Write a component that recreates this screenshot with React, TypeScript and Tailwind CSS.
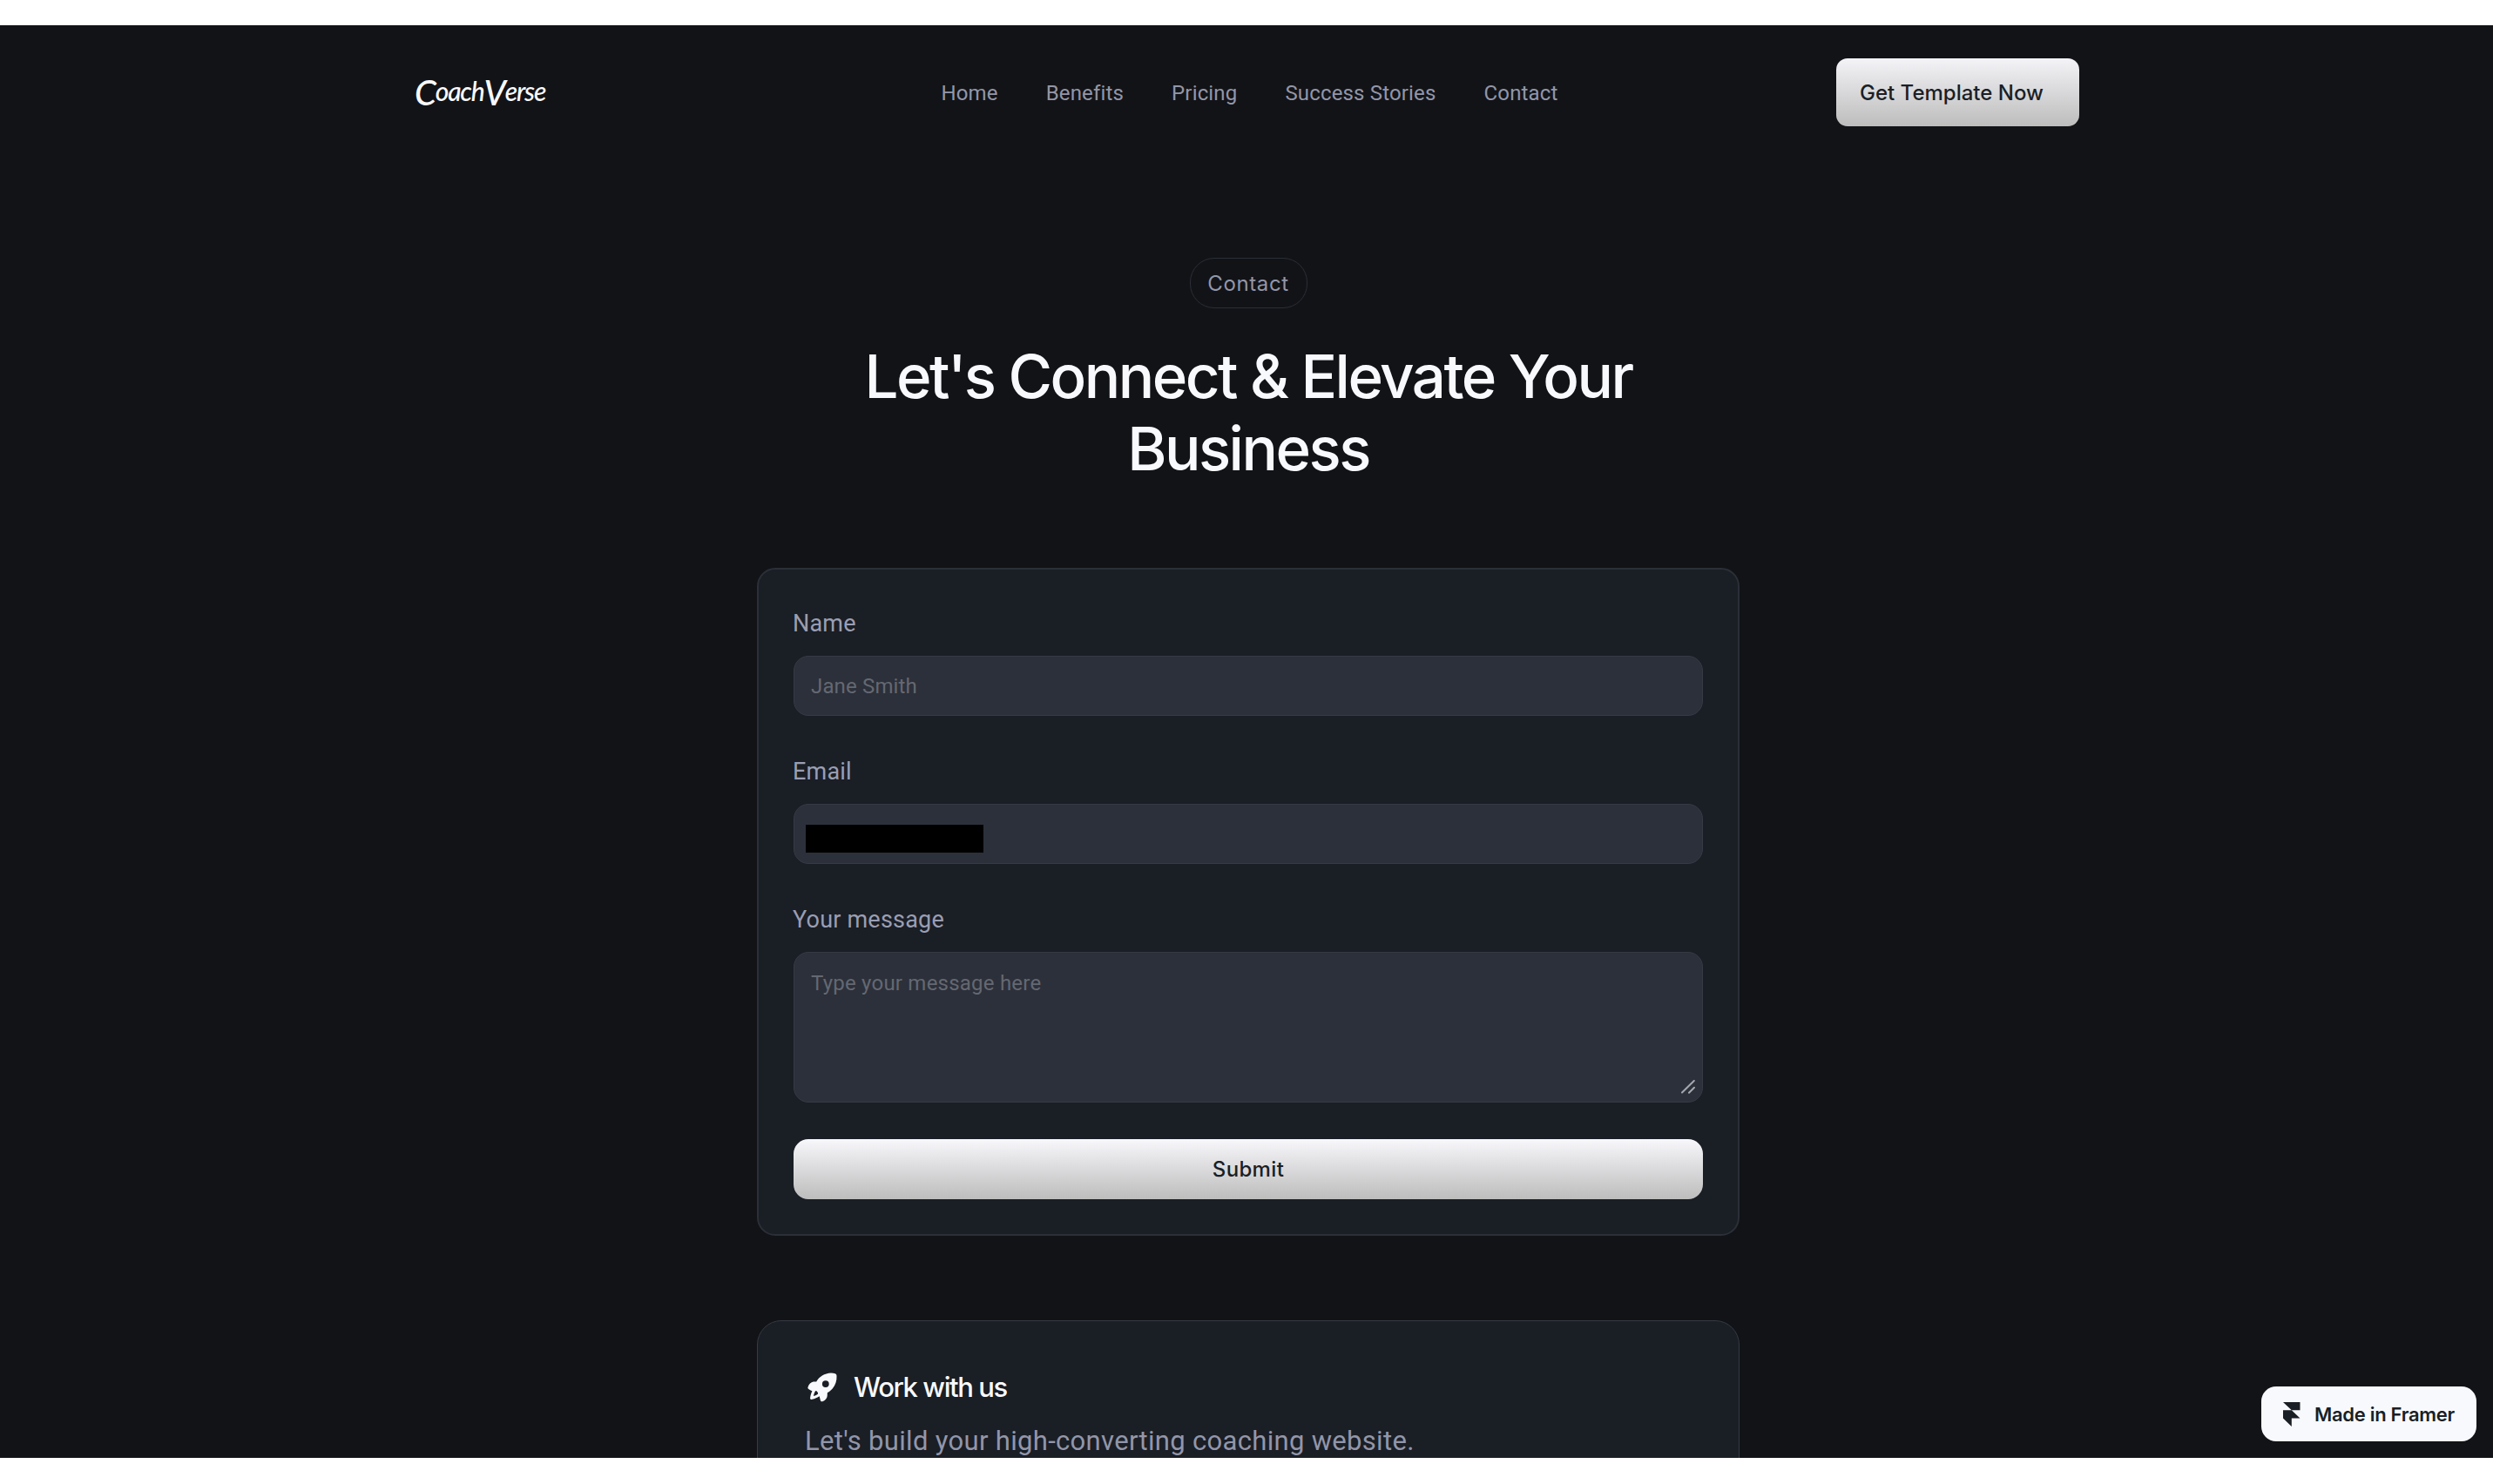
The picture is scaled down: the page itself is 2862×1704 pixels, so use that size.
const links = ['Home', 'Benefits', 'Pricing', 'Success Stories', 'Contact'];

function Logo() {
  return (
    <a className="-ml-[3px] flex h-[78px] items-baseline justify-self-start font-['Lato','Liberation_Sans',sans-serif] text-[30px] leading-[74px] font-medium tracking-[-1.2px] text-[#f8f9fc] italic">
      <span>
        <span className="align-[-5px] text-[40px] leading-none">C</span>oach
        <span className="align-[-5px] text-[40px] leading-none">V</span>erse
      </span>
    </a>
  );
}

function Label({ children }: { children: string }) {
  return (
    <label className="mb-4 block h-[43px] pt-px text-[27px] leading-[43px] tracking-[0.2px] text-[#9a9eb3]">
      <span className="-ml-px">{children}</span>
    </label>
  );
}

function Rocket() {
  return (
    <svg viewBox="0 0 34 34" className="size-[34px]" fill="#f8f9fc">
      <path
        fillRule="evenodd"
        d="M27 .6c2 0 3.600.2 4.800.6 1.200.4 1.600 1.200 1.700 2.700.3 5.500-1.400 10.500-4.800 14.600-1.500 1.900-3.600 3.500-5.700 4.500-.3 1-.1 2.400-.3 4-.3 2.800-2.500 5.300-5.400 6.200-1.300.4-2.100-.1-2.500-1.400l-1.100-4.600c-1.300.9-2.900 1.700-4.900 2.500-1.700.7-3.200 1.200-4.300 1.200-1.100 0-1.600-.7-1.400-1.900.3-2.600 1-5 2.300-7.800-1.600-.6-3-1.300-4.100-2.100C.4 18.500.2 17.700.6 16.600 1.600 13.600 3.900 11.100 6.900 10.600c1.200-.2 2.300-.1 3.300-.1C13.300 5 19.500.9 27 .6ZM20.800 9.200a3.900 3.900 0 1 0 0 7.800 3.900 3.900 0 0 0 0-7.800ZM8.600 22c-.9 1.700-1.400 3.300-1.700 5 1.800-.5 3.300-1.200 4.600-2.100.7-.5.8-1.200.3-2l-1-1.400c-.8-1-1.600-.7-2.200.5Z"
      />
    </svg>
  );
}

export default function App() {
  return (
    <div className="h-[1704px] w-[2862px] overflow-hidden bg-white pt-[29px] font-['Roboto','Liberation_Sans',sans-serif]">
      <main className="relative h-[1645px] overflow-hidden bg-[#121317] pl-1">
        <header className="mx-auto mt-[38px] grid h-[78px] w-[1908px] grid-cols-[1fr_auto_1fr] items-center">
          <Logo />
          <nav className="flex gap-[55px] pt-px pl-[3px] text-2xl tracking-[0.16px] text-[#9296a9]">
            {links.map((l) => (
              <a key={l}>{l}</a>
            ))}
          </nav>
          <a className="flex h-[78px] w-[279px] items-center justify-self-end rounded-[13px] bg-linear-to-b from-[#f4f4f8] to-[#bdbdbd] pt-px pl-[27px] font-['Inter',sans-serif] text-2xl font-medium text-[#1a1f26]">
            Get Template Now
          </a>
        </header>

        <section className="mt-[151px] flex flex-col items-center font-['Inter',sans-serif]">
          <span className="flex h-[58px] w-[135px] items-center justify-center rounded-[28px] border border-[#2a2e37] pt-px text-2xl tracking-[0.6px] text-[#9296a9]">
            Contact
          </span>
          <h1 className="mt-9 w-[1000px] pt-px text-center text-[69px] leading-[83px] font-medium tracking-[-2.5px] text-[#f8f9fc]">
            Let's Connect &amp; Elevate Your Business
          </h1>
        </section>

        <form className="mx-auto mt-[95px] w-[1128px] rounded-[21px] border-2 border-[#2b2f38] bg-[#1a1e25] p-10">
          <Label>Name</Label>
          <div className="flex h-[69px] items-center rounded-[17px] border border-[#363a44] bg-[#2c303a] px-[19px] pt-px text-2xl tracking-[0.15px] text-[#646872]">
            Jane Smith
          </div>
          <div className="h-[42px]" />
          <Label>Email</Label>
          <div className="h-[69px] rounded-[17px] border border-[#363a44] bg-[#2c303a] pt-[23px] pl-[13px]">
            <div className="h-8 w-[204px] bg-black" />
          </div>
          <div className="h-[42px]" />
          <Label>Your message</Label>
          <div className="flex h-[173px] items-start justify-between rounded-[17px] border border-[#363a44] bg-[#2c303a] pt-[19px] pr-2 pl-[19px] text-2xl leading-8 tracking-[0.22px] text-[#646872]">
            Type your message here
            <svg
              viewBox="0 0 16 16"
              className="mb-[9px] size-4 self-end"
              stroke="#a6a8b0"
              strokeWidth="2"
              strokeLinecap="round"
            >
              <path d="M1 14.500 14.800 1M9 14.800l6-6" />
            </svg>
          </div>
          <div className="mt-[42px] flex h-[69px] items-center justify-center rounded-[17px] bg-linear-to-b from-[#f8f8fc] to-[#bdbdbd] font-['Inter',sans-serif] text-2xl font-medium tracking-[0.35px] text-[#1a1f26]">
            Submit
          </div>
        </form>

        <section className="mx-auto mt-[97px] h-[400px] w-[1128px] rounded-[28px] border border-[#363a44] bg-[#1a1e25] px-[54px] pt-[52px]">
          <div className="flex h-12 items-center gap-[19px] pl-[3px]">
            <Rocket />
            <h2 className="font-['Inter',sans-serif] text-[31px] font-medium tracking-[-1.4px] text-[#f8f9fc]">
              Work with us
            </h2>
          </div>
          <p className="mt-[14px] text-[31px] leading-[48px] tracking-[0.32px] text-[#9296a9]">
            Let's build your high-converting coaching website.
          </p>
        </section>

        <a className="absolute top-[1563px] left-[2596px] flex h-[63px] w-[247px] items-center rounded-[17px] bg-[#f8f9fc] pt-px pl-[25px] font-['Inter',sans-serif] text-[22px] font-semibold tracking-[-0.3px] text-[#1a1f26]">
          <svg viewBox="0 0 20 28" className="mr-4 h-7 w-5" fill="#1a1f26">
            <path d="M0 0h19.500v9.300H9.800ZM0 9.300h9.800l9.700 9.300H9.800V28L0 18.600Z" />
          </svg>
          Made in Framer
        </a>
      </main>
    </div>
  );
}
